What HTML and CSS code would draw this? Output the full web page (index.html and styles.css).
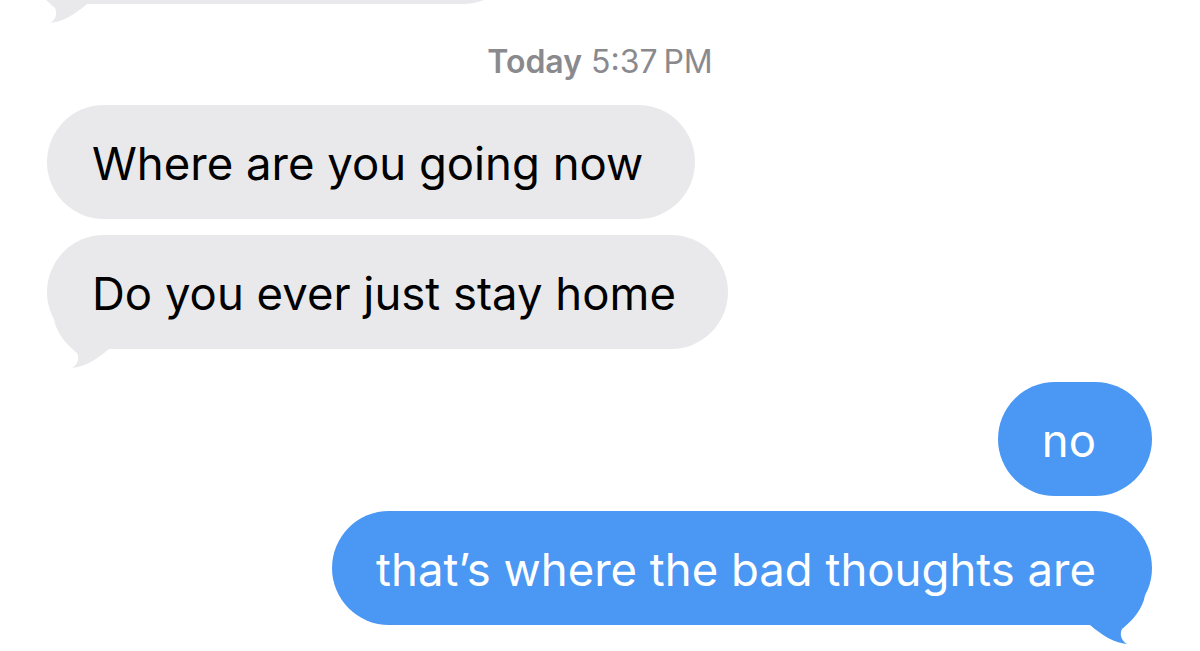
FILE: index.html
```html
<!DOCTYPE html>
<html lang="en">
<head>
<meta charset="utf-8">
<title>Messages</title>
<link rel="stylesheet" href="styles.css">
</head>
<body>
<div class="thread">
  <div class="row row-in row-top">
    <div class="bubble in top-bubble">
      <span class="txt">&nbsp;</span>
      <svg class="tail tail-in" width="70" height="50" viewBox="0 0 70 50"><path d="M7 0 C9 14 20 26 30 34 C33 40 30 46 25 49 C38 48 50 40 62 30 L62 0 Z"/></svg>
    </div>
  </div>
  <div class="stamp"><span class="stamp-day">Today</span> 5:37&#8201;PM</div>
  <div class="row row-in r1">
    <div class="bubble in">
      <span class="txt">Where are you going now</span>
    </div>
  </div>
  <div class="row row-in r2">
    <div class="bubble in">
      <span class="txt">Do you ever just stay home</span>
      <svg class="tail tail-in" width="70" height="50" viewBox="0 0 70 50"><path d="M7 0 C9 14 20 26 30 34 C33 40 30 46 25 49 C38 48 50 40 62 30 L62 0 Z"/></svg>
    </div>
  </div>
  <div class="row row-out r3">
    <div class="bubble out">
      <span class="txt">no</span>
    </div>
  </div>
  <div class="row row-out r4">
    <div class="bubble out">
      <span class="txt">that’s where the bad thoughts are</span>
      <svg class="tail tail-out" width="70" height="50" viewBox="0 0 70 50"><path d="M7 0 C9 14 20 26 30 34 C33 40 30 46 25 49 C38 48 50 40 62 30 L62 0 Z"/></svg>
    </div>
  </div>
</div>
</body>
</html>
```
FILE: styles.css
```css
html, body {
  margin: 0;
  padding: 0;
  background: #ffffff;
}
body {
  width: 1200px;
  height: 651px;
  overflow: hidden;
  font-family: Inter, "Liberation Sans", Arial, sans-serif;
}
.thread {
  display: flex;
  flex-direction: column;
}
.row {
  display: flex;
}
.row-in {
  justify-content: flex-start;
  padding-left: 47px;
}
.row-out {
  justify-content: flex-end;
  padding-right: 48px;
}
.bubble {
  position: relative;
  height: 114px;
  border-radius: 57px;
  display: flex;
  align-items: center;
  box-sizing: border-box;
  font-size: 45.5px;
  letter-spacing: 0;
  white-space: nowrap;
}
.bubble.in {
  background: #e9e9eb;
  color: #000000;
  padding: 0 52px 0 45px;
}
.bubble.out {
  background: #4a97f4;
  color: #ffffff;
  padding: 0 56px 0 44px;
}
.txt {
  display: block;
  line-height: 54px;
  padding-top: 4px;
}
.tail {
  position: absolute;
  bottom: -20px;
  display: block;
}
.tail-in {
  left: 0;
  fill: #e9e9eb;
}
.tail-out {
  right: 0;
  fill: #4a97f4;
  transform: scaleX(-1);
}
.row-top {
  padding-left: 25px;
  margin-top: -110px;
}
.top-bubble {
  width: 495px;
}
.stamp {
  margin-top: 40px;
  text-align: center;
  font-size: 32px;
  line-height: 36px;
  color: #8a8a8e;
}
.stamp-day {
  font-weight: 600;
}
.r1 {
  margin-top: 25px;
}
.r2 {
  margin-top: 16px;
}
.r3 {
  margin-top: 33px;
}
.r4 {
  margin-top: 15px;
}
```
